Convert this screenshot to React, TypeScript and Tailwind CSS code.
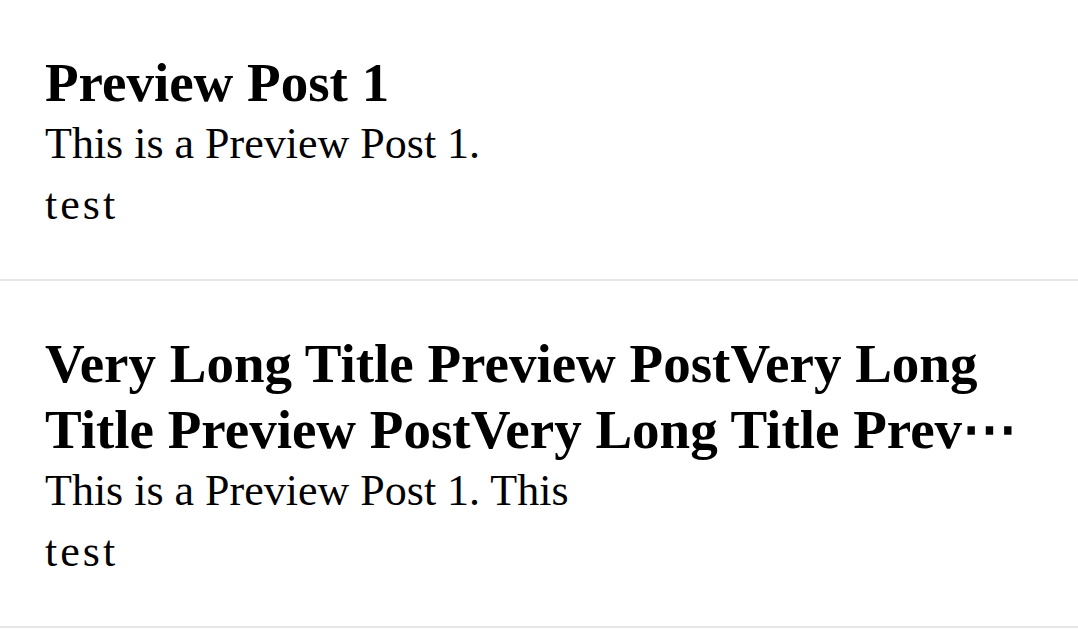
const posts = [
  {
    title: 'Preview Post 1',
    description: 'This is a Preview Post 1.',
    tag: 'test',
  },
  {
    title: 'Very Long Title Preview PostVery Long Title Preview PostVery Long Title Prev⋯',
    description: 'This is a Preview Post 1. This',
    tag: 'test',
  },
];

function PostPreview({ title, description, tag }: { title: string; description: string; tag: string }) {
  return (
    <article className="border-b-2 border-[#e6e6e6] px-[45px] pt-[50px] pb-[43px]">
      <h2 className="line-clamp-2 text-[55px] leading-[66px] font-bold text-black">{title}</h2>
      <p className="text-[44px] leading-[56px] text-black">{description}</p>
      <div className="mt-[2px] text-[44px] leading-[62px] tracking-[3px] text-black">{tag}</div>
    </article>
  );
}

export default function App() {
  return (
    <div className="min-h-[630px] bg-white font-['Liberation_Serif',serif]">
      {posts.map((post, i) => (
        <PostPreview key={i} {...post} />
      ))}
    </div>
  );
}
